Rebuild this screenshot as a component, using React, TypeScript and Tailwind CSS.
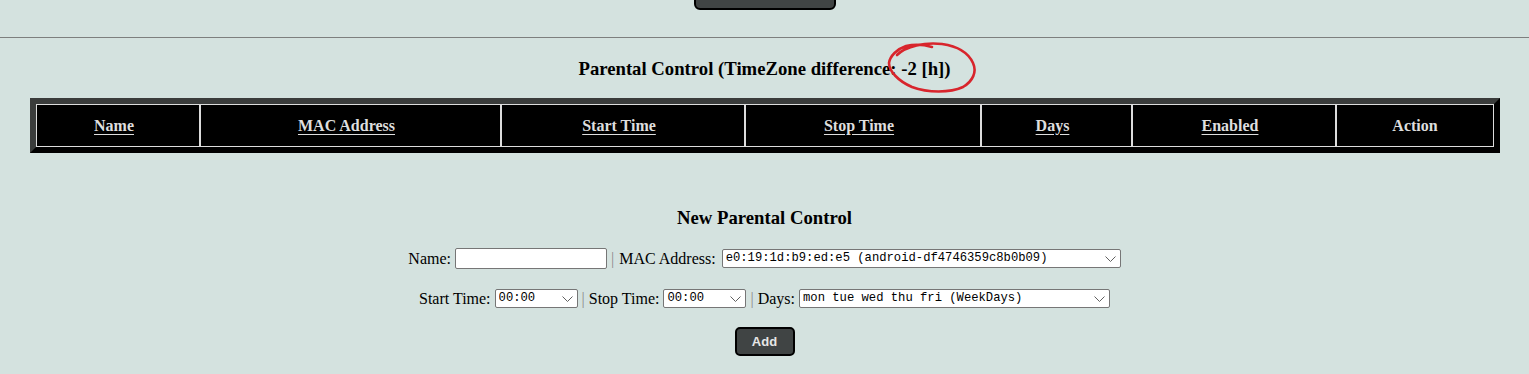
import React from "react";

const serif = { fontFamily: '"Liberation Serif", "Times New Roman", serif' };

function Chevron() {
  return (
    <svg
      className="pointer-events-none absolute right-[5px] top-1/2 -translate-y-1/2"
      width="11"
      height="6"
      viewBox="0 0 11 6"
      fill="none"
    >
      <path d="M0.5 0.5 L5.5 5.5 L10.5 0.5" stroke="#606060" strokeWidth="1" />
    </svg>
  );
}

function Sel({ w, value }: { w: string; value: string }) {
  return (
    <span className={`relative flex ${w} h-[19px]`}>
      <select
        defaultValue={value}
        className="block appearance-none w-full h-full bg-white border border-[#767676] rounded-[2px] pl-[3px] pr-[18px] text-[12.2px] leading-[17px] text-black outline-none"
        style={{ fontFamily: '"Liberation Mono", "DejaVu Sans Mono", monospace' }}
      >
        <option value={value}>{value}</option>
      </select>
      <Chevron />
    </span>
  );
}

const cols = [
  { label: "Name", w: "w-[164px]", link: true },
  { label: "MAC Address", w: "w-[301px]", link: true },
  { label: "Start Time", w: "w-[244px]", link: true },
  { label: "Stop Time", w: "w-[236px]", link: true },
  { label: "Days", w: "w-[151px]", link: true },
  { label: "Enabled", w: "w-[204px]", link: true },
  { label: "Action", w: "w-[158px]", link: false },
];

export default function App() {
  return (
    <div className="w-[1529px] h-[374px] overflow-hidden bg-[#d4e2df] text-black" style={serif}>
      {/* clipped top button */}
      <div className="flex justify-center">
        <button
          className="mt-[-19px] ml-[1px] w-[142px] h-[29px] rounded-[6px] border-2 border-black bg-[#404444] text-[13px] font-bold text-[#e6e6e6]"
          style={{ fontFamily: '"Liberation Sans", Arial, sans-serif' }}
        >
          Confirm Forward
        </button>
      </div>

      <div className="mt-[27px] h-[1px] bg-[#7d7f7e]" />

      <div className="relative pt-[20px]">
        <h3 className="text-center text-[18.72px] leading-[22px] font-bold">
          Parental Control (TimeZone difference: -2 [h])
        </h3>
        <svg
          className="pointer-events-none absolute left-0 top-0"
          width="1529"
          height="80"
          viewBox="0 38 1529 80"
          fill="none"
        >
          <path
            d="M897 55 C906 46, 925 42, 942 44 C956 46, 968 52, 973 63 C977 72, 973 81, 963 87 C950 93, 928 93, 912 87 C898 81, 889 71, 889 63 C890 56, 897 49, 906 46 C915 44, 925 45, 932 47"
            stroke="#d8252c"
            strokeWidth="2.6"
            strokeLinecap="round"
          />
        </svg>
      </div>

      <div className="mt-[18px] ml-[30px]">
        <table className="border-separate border-spacing-0 border-[6px] bg-black" style={{ borderStyle: "outset", borderColor: "#3a3c3b #262827 #262827 #3a3c3b" }}>
          <thead>
            <tr>
              {cols.map((c) => (
                <th
                  key={c.label}
                  className={`${c.w} h-[43px] p-0 border border-[#dcdcdc] bg-black text-center align-middle text-[16px] font-bold text-[#dedede]`}
                >
                  {c.link ? (
                    <span className="inline-block pr-[8px]">
                      <span className="underline underline-offset-[3px]">{c.label}</span>
                    </span>
                  ) : (
                    c.label
                  )}
                </th>
              ))}
            </tr>
          </thead>
        </table>
      </div>

      <h3 className="mt-[54px] text-center text-[18.72px] leading-[22px] font-bold">New Parental Control</h3>

      <div className="mt-[19px] flex justify-center items-center gap-[4px] h-[21px] text-[16px]">
        <span>Name:</span>
        <input className="w-[152px] h-[21px] bg-white border border-[#767676] rounded-[2px] outline-none px-[2px]" />
        <span className="text-[#8a8a8a]">|</span>
        <span className="ml-[1px]">MAC Address:</span>
        <span className="ml-[2px] flex">
          <Sel w="w-[399px]" value="e0:19:1d:b9:ed:e5 (android-df4746359c8b0b09)" />
        </span>
      </div>

      <div className="mt-[19px] flex justify-center items-center gap-[4px] h-[21px] text-[16px]">
        <span>Start Time:</span>
        <Sel w="w-[83px]" value="00:00" />
        <span className="text-[#8a8a8a]">|</span>
        <span>Stop Time:</span>
        <Sel w="w-[83px]" value="00:00" />
        <span className="text-[#8a8a8a]">|</span>
        <span>Days:</span>
        <Sel w="w-[311px]" value="mon tue wed thu fri (WeekDays)" />
      </div>

      <div className="mt-[18px] flex justify-center">
        <button
          className="w-[60px] h-[29px] rounded-[5px] border-2 border-black bg-[#404444] text-[13px] font-bold text-[#e6e6e6]"
          style={{ fontFamily: '"Liberation Sans", Arial, sans-serif' }}
        >
          Add
        </button>
      </div>
    </div>
  );
}
